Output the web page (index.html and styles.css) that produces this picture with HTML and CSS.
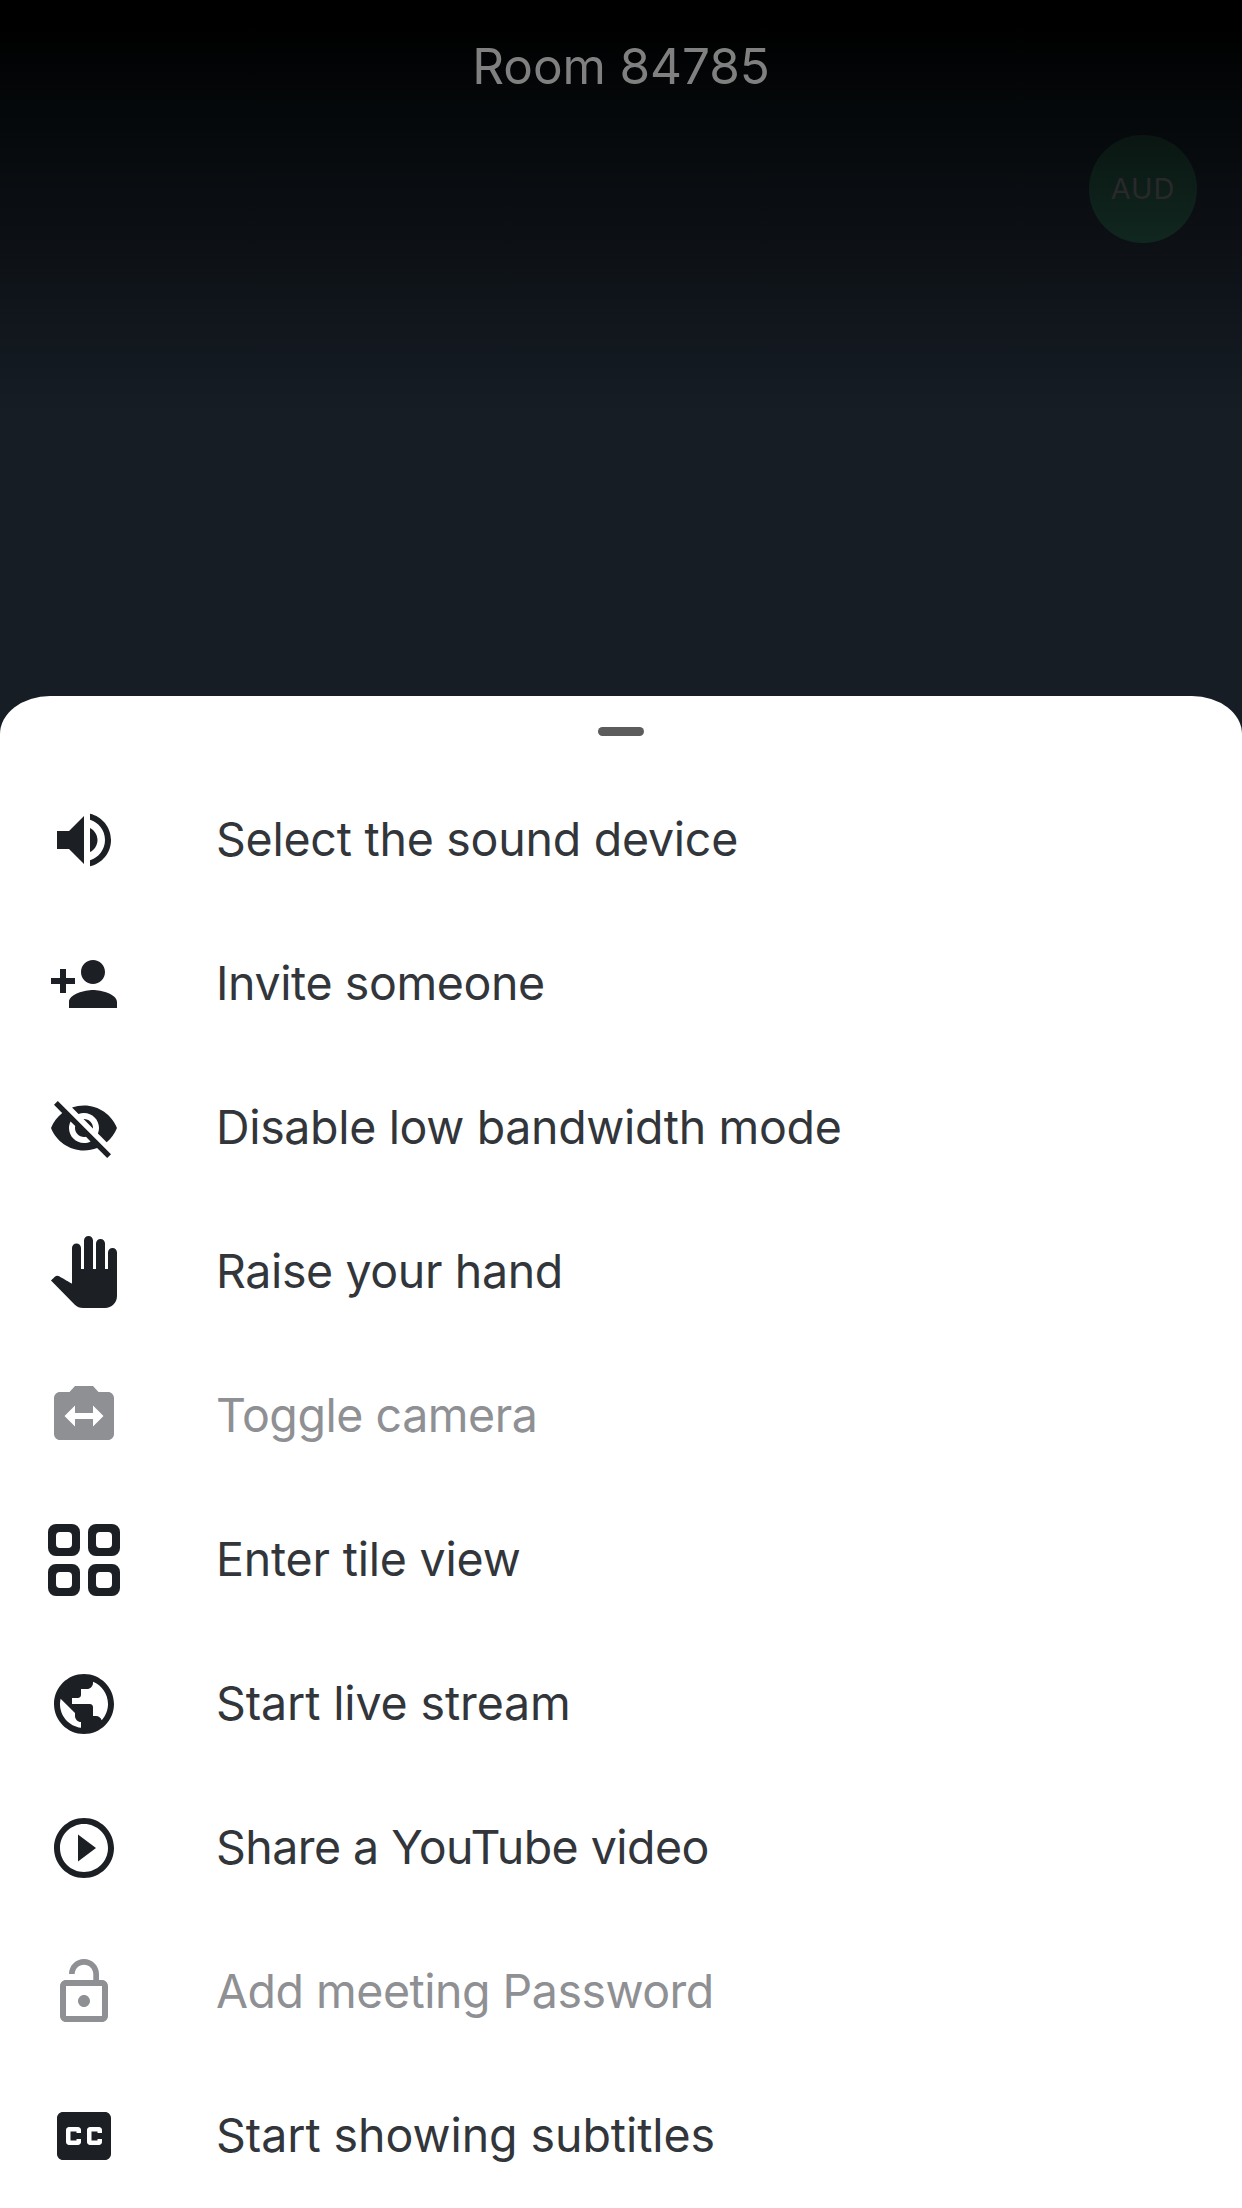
FILE: index.html
```html
<!DOCTYPE html>
<html lang="en">
<head>
<meta charset="utf-8">
<title>Room 84785</title>
<link rel="stylesheet" href="styles.css">
</head>
<body>
<div class="screen">
  <header class="conference">
    <h1 class="room">Room 84785</h1>
    <div class="labels"><span class="badge">AUD</span></div>
  </header>
  <main class="sheet">
    <div class="grip"><span class="handle"></span></div>
    <ul class="menu">
      <li class="item"><svg class="icon" viewBox="0 0 24 24"><path d="M3 9v6h4l5 5V4L7 9H3zm13.500 3c0-1.770-1.020-3.290-2.500-4.030v8.050c1.480-.73 2.500-2.250 2.500-4.020zM14 3.230v2.060c2.890.86 5 3.540 5 6.710s-2.110 5.850-5 6.710v2.060c4.010-.91 7-4.490 7-8.770s-2.990-7.860-7-8.770z"/></svg><span class="text t1">Select the sound device</span></li>
      <li class="item"><svg class="icon" viewBox="0 0 24 24"><path d="M15 12c2.210 0 4-1.790 4-4s-1.790-4-4-4-4 1.790-4 4 1.790 4 4 4zm-9-2V7H4v3H1v2h3v3h2v-3h3v-2H6zm9 4c-2.670 0-8 1.340-8 4v2h16v-2c0-2.660-5.330-4-8-4z"/></svg><span class="text t2">Invite someone</span></li>
      <li class="item"><svg class="icon" viewBox="0 0 24 24"><path d="M12 7c2.760 0 5 2.240 5 5 0 .65-.13 1.260-.36 1.830l2.920 2.920c1.510-1.260 2.700-2.890 3.430-4.750-1.730-4.390-6-7.500-11-7.500-1.400 0-2.740.25-3.980.7l2.160 2.160C10.740 7.130 11.350 7 12 7zM2 4.270l2.280 2.280.46.46C3.080 8.300 1.780 10.020 1 12c1.730 4.390 6 7.500 11 7.500 1.550 0 3.030-.3 4.380-.84l.42.42L19.730 22 21 20.730 3.270 3 2 4.270zM7.530 9.800l1.550 1.550c-.05.21-.08.43-.08.65 0 1.660 1.340 3 3 3 .22 0 .44-.03.65-.08l1.550 1.550c-.67.33-1.410.53-2.200.53-2.760 0-5-2.240-5-5 0-.79.2-1.530.53-2.200zm4.310-.78l3.150 3.150.02-.16c0-1.660-1.340-3-3-3l-.17.010z"/></svg><span class="text t3">Disable low bandwidth mode</span></li>
      <li class="item"><svg class="icon" viewBox="0 0 24 24"><path d="M23 5.500V20c0 2.200-1.800 4-4 4h-7.300c-1.080 0-2.100-.43-2.850-1.190L1 14.830s1.260-1.230 1.300-1.250c.22-.19.49-.29.79-.29.22 0 .42.06.6.16.04.010 4.310 2.460 4.310 2.460V4c0-.83.67-1.500 1.500-1.500S11 3.170 11 4v7h1V1.500c0-.83.67-1.500 1.500-1.500S15 .67 15 1.500V11h1V2.500c0-.83.67-1.500 1.500-1.500s1.500.67 1.500 1.500V11h1V5.500c0-.83.67-1.500 1.500-1.500s1.500.67 1.500 1.500z"/></svg><span class="text t4">Raise your hand</span></li>
      <li class="item disabled"><svg class="icon" viewBox="0 0 24 24"><path d="M20 4h-3.170L15 2H9L7.170 4H4c-1.100 0-2 .9-2 2v12c0 1.100.9 2 2 2h16c1.100 0 2-.9 2-2V6c0-1.100-.9-2-2-2zm-5 11.500V13H9v2.500L5.500 12 9 8.500V11h6V8.500l3.500 3.500-3.500 3.500z"/></svg><span class="text t5">Toggle camera</span></li>
      <li class="item"><svg class="icon" viewBox="0 0 72 72"><defs><path id="tile" fill-rule="evenodd" d="M8 0h16a8 8 0 0 1 8 8v16a8 8 0 0 1-8 8H8a8 8 0 0 1-8-8V8a8 8 0 0 1 8-8zM12 8a4 4 0 0 0-4 4v8a4 4 0 0 0 4 4h8a4 4 0 0 0 4-4v-8a4 4 0 0 0-4-4z"/></defs><use href="#tile"/><use href="#tile" x="40"/><use href="#tile" y="40"/><use href="#tile" x="40" y="40"/></svg><span class="text t6">Enter tile view</span></li>
      <li class="item"><svg class="icon" viewBox="0 0 24 24"><path d="M12 2C6.480 2 2 6.480 2 12s4.480 10 10 10 10-4.480 10-10S17.520 2 12 2zm-1 17.930c-3.950-.49-7-3.850-7-7.930 0-.62.08-1.210.21-1.790L9 15v1c0 1.100.9 2 2 2v1.930zm6.900-2.540c-.26-.81-1-1.390-1.900-1.390h-1v-3c0-.55-.45-1-1-1H8v-2h2c.55 0 1-.45 1-1V7h2c1.100 0 2-.9 2-2v-.41c2.930 1.190 5 4.060 5 7.410 0 2.080-.8 3.970-2.100 5.390z"/></svg><span class="text t7">Start live stream</span></li>
      <li class="item"><svg class="icon" viewBox="0 0 24 24"><path d="M10 16.500l6-4.500-6-4.500v9zM12 2C6.480 2 2 6.480 2 12s4.480 10 10 10 10-4.480 10-10S17.520 2 12 2zm0 18c-4.410 0-8-3.590-8-8s3.590-8 8-8 8 3.590 8 8-3.590 8-8 8z"/></svg><span class="text t8">Share a YouTube video</span></li>
      <li class="item disabled"><svg class="icon" viewBox="0 0 24 24"><path d="M12 17c1.100 0 2-.9 2-2s-.9-2-2-2-2 .9-2 2 .9 2 2 2zm6-9h-1V6c0-2.760-2.240-5-5-5S7 3.240 7 6h1.900c0-1.710 1.390-3.100 3.100-3.100 1.710 0 3.100 1.390 3.100 3.100v2H6c-1.100 0-2 .9-2 2v10c0 1.100.9 2 2 2h12c1.100 0 2-.9 2-2V10c0-1.100-.9-2-2-2zm0 12H6V10h12v10z"/></svg><span class="text t9">Add meeting Password</span></li>
      <li class="item"><svg class="icon" viewBox="0 0 24 24"><path d="M19 4H5c-1.110 0-2 .9-2 2v12c0 1.100.89 2 2 2h14c1.100 0 2-.9 2-2V6c0-1.100-.9-2-2-2zm-8 7H9.500v-.5h-2v3h2V13H11v1c0 .55-.45 1-1 1H7c-.55 0-1-.45-1-1v-4c0-.55.45-1 1-1h3c.55 0 1 .45 1 1v1zm7 0h-1.500v-.5h-2v3h2V13H18v1c0 .55-.45 1-1 1h-3c-.55 0-1-.45-1-1v-4c0-.55.45-1 1-1h3c.55 0 1 .45 1 1v1z"/></svg><span class="text t10">Start showing subtitles</span></li>
    </ul>
  </main>
</div>
</body>
</html>
```
FILE: styles.css
```css
* {
  box-sizing: border-box;
}

body {
  margin: 0;
  font-family: Inter, "Liberation Sans", sans-serif;
}

.screen {
  display: flex;
  flex-direction: column;
  width: 1242px;
  height: 2208px;
  overflow: hidden;
  background: linear-gradient(#000 0, #000 25px, #05080a 110px, #0d1116 250px, #161d25 415px, #161d24 450px);
}

.conference {
  display: flex;
  flex-direction: column;
  height: 696px;
}

.room {
  margin: 0;
  height: 135px;
  font-size: 49.5px;
  font-weight: 400;
  line-height: 132px;
  letter-spacing: -0.1px;
  text-align: center;
  color: #808080;
}

.labels {
  display: flex;
  justify-content: flex-end;
  padding-right: 45px;
}

.badge {
  width: 108px;
  height: 108px;
  border-radius: 50%;
  background: linear-gradient(#0a1611, #10271f);
  color: #29292b;
  font-size: 29px;
  line-height: 107px;
  letter-spacing: 0.9px;
  text-align: center;
}

.sheet {
  height: 1512px;
  background: #fff;
  border-radius: 50px 50px 0 0 / 38px 38px 0 0;
}

.grip {
  display: flex;
  justify-content: center;
  height: 72px;
  padding-top: 31px;
}

.handle {
  width: 46px;
  height: 9px;
  border-radius: 4.5px;
  background: #5c5c5c;
}

.menu {
  margin: 0;
  padding: 0;
  list-style: none;
}

.item {
  display: flex;
  align-items: center;
  gap: 96px;
  height: 144px;
  padding-left: 48px;
  color: #32363b;
}

.icon {
  flex: none;
  width: 72px;
  height: 72px;
  fill: #1c2025;
}

.disabled {
  color: #8f9094;
}

.disabled .icon {
  fill: #8f9094;
}

.text {
  padding-bottom: 2px;
  font-size: 46.5px;
  line-height: 54px;
  white-space: nowrap;
}

.t1 { letter-spacing: -0.25px; }
.t2 { letter-spacing: -0.4px; }
.t3 { letter-spacing: -0.34px; }
.t4 { letter-spacing: -0.38px; }
.t5 { letter-spacing: -0.45px; }
.t6 { letter-spacing: -0.2px; }
.t7 { letter-spacing: -0.12px; }
.t8 { letter-spacing: -0.54px; }
.t9 { letter-spacing: -0.5px; }
.t10 { letter-spacing: -0.06px; }
```
